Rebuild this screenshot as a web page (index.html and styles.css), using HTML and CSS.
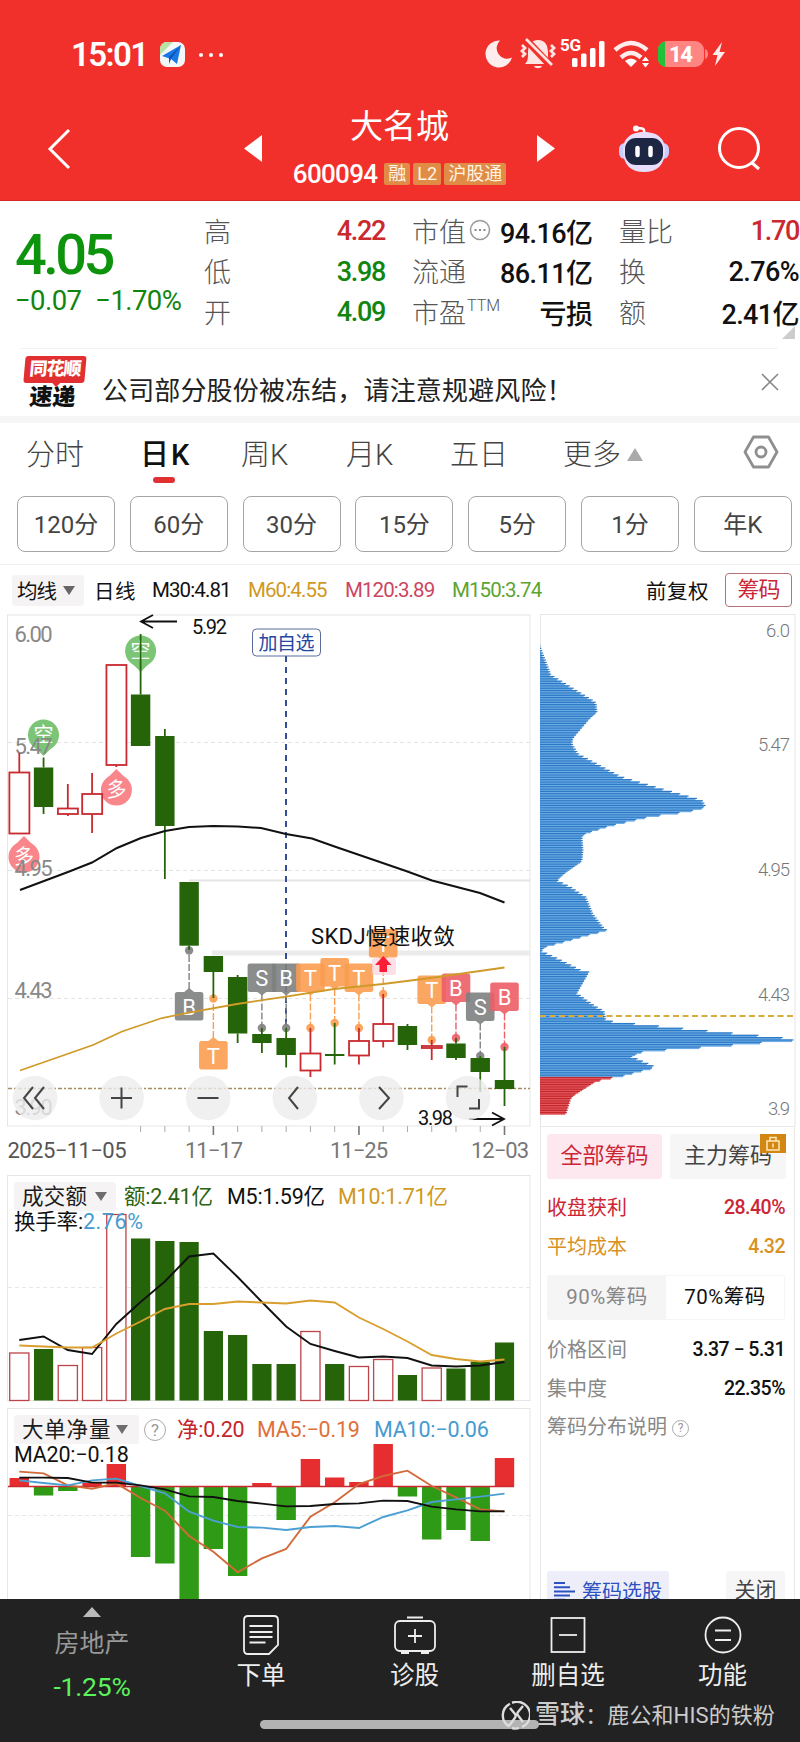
FILE: index.html
```html
<!DOCTYPE html>
<html lang="zh-CN">
<head>
  <meta charset="UTF-8">
  <meta name="viewport" content="width=device-width, initial-scale=1.0">
  <link rel="stylesheet" href="styles.css">
  <title>大名城 600094</title>
</head>
<body>
  <!-- Header -->
  <header class="header">
    <div class="status">
      <span class="clock">15:01</span>
      <svg class="app-icon" width="25" height="25" viewBox="0 0 25 25">
        <rect width="25" height="25" rx="7" fill="#f4f7f8"/>
        <path d="M0 13V7a7 7 0 0 1 7-7h6z" fill="#b6e3a4"/>
        <path d="M2 14 21 3 17 22 11 17z" fill="#1a78e6"/>
        <path d="M11 17 21 3 9 15v7z" fill="#0c54b8"/>
      </svg>
      <span class="more-dots"><i></i><i></i><i></i></span>
      <svg class="status-icons" width="244" height="42" viewBox="484 32 244 42" fill="#fff">
        <path d="M500 40.500A13.500 13.500 0 1 0 512 57.500 10.500 10.500 0 0 1 500 40.500z" fill="#ffecec"/>
        <path d="M525 64c3-3 3-6 3-11 0-8 3-13 10-13s10 5 10 13c0 5 0 8 3 11zM534 66h8c-1 3-7 3-8 0z" fill="#ffe4e4"/>
        <path d="M525 38.500 550 65" stroke="#f1302b" stroke-width="7"/>
        <path d="m526 39 26 26" stroke="#ffe4e4" stroke-width="2.600" fill="none"/>
        <path d="m522 45 3 3-3 3 3 3-3 3M551 45l3 3-3 3 3 3-3 3" stroke="#ffe4e4" stroke-width="2.800" fill="none"/>
        <text x="560" y="50.500" font-size="17" font-weight="700" textLength="21">5G</text>
        <rect x="572" y="58" width="5.500" height="9" rx="1.500"/><rect x="581" y="53.500" width="5.500" height="13.500" rx="1.500"/>
        <rect x="590" y="48" width="5.500" height="19" rx="1.500"/><rect x="599" y="41" width="5.500" height="26" rx="1.500"/>
        <g fill="none" stroke="#ffecec" stroke-width="4.500"><path d="M615 50q16-14 32 0M621 57.500q10-9 20 0"/></g>
        <path d="M625 61q6-5 12 0l-6 6z"/><path d="m642 61 3.500-4.500 3.500 4.500zM642 63l3.500 4.500 3.500-4.500z"/>
        <rect x="658" y="41" width="46" height="26" rx="9" fill="#ff8583"/>
        <path d="M665 41.500a8 8 0 0 0-7 8v9.500a8 8 0 0 0 7 8z" fill="#23c03a"/>
        <path d="M705 49q3 1 3 5t-3 5z" fill="#ff8583"/>
        <text x="669" y="62" font-size="22" font-weight="800" textLength="24">14</text>
        <path d="m722 42-9.500 13h5l-2.500 11 10-14h-5.500z" fill="#ffecec"/>
      </svg>
    </div>
    <div class="nav">
      <svg class="back" width="24" height="42" viewBox="0 0 24 42"><path d="M22 2 3 21 22 40" fill="none" stroke="#fff" stroke-width="3"/></svg>
      <svg class="prev" width="18" height="27" viewBox="0 0 18 27"><path d="M18 0v27L0 13.500z" fill="#fff"/></svg>
      <div class="stock">
        <h1>大名城</h1>
        <div class="code">600094 <span class="tag">融</span><span class="tag">L2</span><span class="tag">沪股通</span></div>
      </div>
      <svg class="next" width="18" height="27" viewBox="0 0 18 27"><path d="M0 0v27l18-13.500z" fill="#fff"/></svg>
      <svg class="robot" width="52" height="50" viewBox="0 0 52 50">
        <path d="M26 9c1-5-2-5-8-5" fill="none" stroke="#fff" stroke-width="2.500"/>
        <circle cx="18" cy="4.500" r="3" fill="#fff"/>
        <rect x="1" y="19" width="50" height="16" rx="6" fill="#c9cdfb"/>
        <path d="M26 8c16 0 21 9 21 18 0 15-8 22-21 22S5 41 5 26C5 17 10 8 26 8z" fill="#e8defb"/>
        <rect x="7" y="14" width="38" height="27" rx="11" fill="#1d2744"/>
        <path d="M19.500 24v7M32.500 24v7" stroke="#fff" stroke-width="4.500" stroke-linecap="round"/>
      </svg>
      <svg class="search" width="46" height="46" viewBox="0 0 46 46" fill="none" stroke="#fff" stroke-width="3"><circle cx="22" cy="22" r="19.500"/><path d="m34 36 8 7"/></svg>
    </div>
  </header>

  <!-- Quote -->
  <section class="quote">
    <div class="price">
      <div class="last">4.05</div>
      <div class="change"><span>−0.07</span><span>−1.70%</span></div>
    </div>
    <dl class="facts hl">
      <dt>高</dt><dd class="up">4.22</dd>
      <dt>低</dt><dd class="down">3.98</dd>
      <dt>开</dt><dd class="down">4.09</dd>
    </dl>
    <dl class="facts cap">
      <dt>市值<svg width="22" height="22" viewBox="0 0 22 22"><circle cx="11" cy="11" r="9.500" fill="none" stroke="#999" stroke-width="1.500"/><path d="M5.500 11h2m2.500 0h2m2.500 0h2" stroke="#888" stroke-width="2"/></svg></dt><dd>94.16亿</dd>
      <dt>流通</dt><dd>86.11亿</dd>
      <dt>市盈<sup>TTM</sup></dt><dd>亏损</dd>
    </dl>
    <dl class="facts vol">
      <dt>量比</dt><dd class="up tight">1.70</dd>
      <dt>换</dt><dd>2.76%</dd>
      <dt>额</dt><dd>2.41亿</dd>
    </dl>
    <i class="corner"></i>
  </section>

  <!-- Notice -->
  <section class="notice">
    <div class="notice-logo"><b>同花顺</b><em>速递</em></div>
    <p>公司部分股份被冻结，请注意规避风险！</p>
    <svg width="18" height="18" viewBox="0 0 18 18"><path d="m1 1 16 16M17 1 1 17" stroke="#888" stroke-width="1.600"/></svg>
  </section>

  <!-- Chart tabs -->
  <nav class="tabs">
    <span>分时</span><span class="active">日K</span><span>周K</span><span>月K</span><span>五日</span><span>更多<i class="tri-up"></i></span>
    <svg width="36" height="34" viewBox="0 0 36 34" fill="none" stroke="#8f8f8f" stroke-width="2.800"><path d="M10.500 2h15L34 17l-8.500 15h-15L2 17z" stroke-linejoin="round"/><circle cx="18" cy="17" r="5"/></svg>
  </nav>
  <div class="periods">
    <span>120分</span><span>60分</span><span>30分</span><span>15分</span><span>5分</span><span>1分</span><span>年K</span>
  </div>
  <div class="ma-row">
    <span class="select">均线<i class="tri-down"></i></span>
    <span class="day">日线</span><span>M30:4.81</span><span class="m60">M60:4.55</span><span class="m120">M120:3.89</span><span class="m150">M150:3.74</span>
    <span class="adjust">前复权</span><span class="chip-btn">筹码</span>
  </div>

  <main class="charts">
    <div class="left">
      <svg id="kline" width="540" height="560" viewBox="0 612 540 560"></svg>
      <div class="panel">
        <svg id="volume" width="540" height="236" viewBox="0 1172 540 236"></svg>
        <div class="legend">
          <span class="select">成交额<i class="tri-down"></i></span>
          <span class="c-green">额:2.41亿</span><span class="m5">M5:1.59亿</span><span class="m60 m10">M10:1.71亿</span>
          <div class="second">换手率:<span class="c-blue rate">2.76%</span></div>
        </div>
      </div>
      <div class="panel">
        <svg id="netflow" width="540" height="191" viewBox="0 1408 540 191"></svg>
        <div class="legend net">
          <span class="select">大单净量<i class="tri-down"></i></span><span class="help">?</span>
          <span class="c-red">净:0.20</span><span class="c-orange">MA5:−0.19</span><span class="c-blue">MA10:−0.06</span>
          <div class="second">MA20:−0.18</div>
        </div>
      </div>
    </div>

    <aside class="right">
      <svg id="chips" width="260" height="514" viewBox="540 612 260 514"></svg>
      <div class="chip-info">
        <div class="chip-tabs">
          <span class="on">全部筹码</span>
          <span>主力筹码<i class="lock"><svg width="16" height="15" viewBox="0 0 16 15" fill="none" stroke="#ffe7b8" stroke-width="1.500"><rect x="2" y="5" width="12" height="9"/><path d="M5 5V1.500h6V5M8 7.500v4"/></svg></i></span>
        </div>
        <div class="row profit"><span>收盘获利</span><b>28.40%</b></div>
        <div class="row cost"><span>平均成本</span><b>4.32</b></div>
        <div class="segment"><span>90%筹码</span><span class="on">70%筹码</span></div>
        <div class="row"><span>价格区间</span><b>3.37 − 5.31</b></div>
        <div class="row"><span>集中度</span><b>22.35%</b></div>
        <div class="row"><span>筹码分布说明 <i class="help small">?</i></span></div>
        <div class="chip-actions">
          <span class="pick"><svg width="21" height="21" viewBox="0 0 21 21" stroke="#2b52c0" stroke-width="2"><path d="M0 2h11M0 6.200h16M0 10.400h21M0 14.600h16M0 18.800h11"/></svg>筹码选股</span>
          <span class="close">关闭</span>
        </div>
      </div>
    </aside>
  </main>

  <!-- Bottom bar -->
  <footer class="footer">
    <div class="sector"><i class="tri-up"></i><span>房地产</span><b>-1.25%</b></div>
    <div class="item">
      <svg width="36" height="40" viewBox="0 0 36 40"><path d="M5 1h26q4 0 4 4v25l-9 9H5q-4 0-4-4V5q0-4 4-4zM6.500 11h23M6.500 17h23M6.500 22h23M6.500 27.500h16"/></svg>
      <span>下单</span>
    </div>
    <div class="item">
      <svg width="42" height="40" viewBox="0 0 42 40"><rect x="1" y="6" width="40" height="30" rx="5"/><path d="M13 2.500h16M7 38h8M27 38h8M21 14v14M14 21h14"/></svg>
      <span>诊股</span>
    </div>
    <div class="item">
      <svg width="36" height="40" viewBox="0 0 36 40"><rect x="1.500" y="3" width="33" height="34"/><path d="M9 20h18"/></svg>
      <span>删自选</span>
    </div>
    <div class="item">
      <svg width="38" height="40" viewBox="0 0 38 40"><circle cx="19" cy="20" r="17.500"/><path d="M11 15.500h16M11 25h16"/></svg>
      <span>功能</span>
    </div>
    <div class="home-bar"></div>
    <div class="watermark">
      <svg width="29" height="29" viewBox="0 0 29 29" fill="none" stroke="#ddd" stroke-width="2.400"><path d="M8 25.500A13 13 0 0 1 9 2.800M11 1.800A13 13 0 0 1 21 26M18 27.200A13 13 0 0 1 11 27M9 7l5 6q1.500 2-.5 4.500L8 25M22 5l-5 6q-1.500 2 .5 4L22 21"/></svg>
      <span><b>雪球</b>：鹿公和HIS的铁粉</span>
    </div>
  </footer>

  <script src="script.js"></script>
</body>
</html>
```
FILE: styles.css
```css
/* General Styles */
* {
  box-sizing: border-box;
}

body {
  margin: 0;
  width: 800px;
  height: 1742px;
  overflow: hidden;
  background: #fff;
  color: #111;
  font-family: Roboto, "Noto Sans CJK SC", sans-serif;
  display: flex;
  flex-direction: column;
}

body > * {
  flex: none;
}

svg {
  display: block;
  flex: none;
}

svg text {
  font-family: Roboto, "Noto Sans CJK SC", sans-serif;
}

h1, p, dl, dt, dd {
  margin: 0;
  font-weight: 400;
}

i, em {
  font-style: normal;
}

.up { color: #c9292f; }
.down { color: #12850f; }

.tri-up, .tri-down {
  display: inline-block;
  border: 8px solid transparent;
}

.tri-up {
  border-top: 0;
  border-bottom: 13px solid #aaa;
}

.tri-down {
  border-width: 9px 6.5px 0;
  border-top-color: #666;
}

/* Header */
.header {
  height: 201px;
  background: #f1302b;
  border-bottom: 1px solid #d5282b;
  color: #fff;
}

.status {
  display: flex;
  align-items: center;
  height: 95px;
  padding: 14px 0 0 71px;
}

.clock {
  width: 89px;
  font-size: 33px;
  font-weight: 600;
  letter-spacing: -1.6px;
}

.more-dots {
  display: flex;
  gap: 6px;
  margin-left: 14px;
}

.more-dots i {
  width: 4px;
  height: 4px;
  border-radius: 50%;
  background: #fff;
}

.status-icons {
  margin-left: 261px;
  margin-top: -3px;
}

.nav {
  display: flex;
  height: 104px;
  align-items: center;
  padding: 3px 0 0 47px;
}

.prev { margin-left: 173px; }

.stock {
  width: 275px;
  text-align: center;
}

.stock h1 {
  height: 50px;
  font-size: 33px;
  line-height: 44px;
}

.code {
  display: flex;
  justify-content: center;
  align-items: center;
  gap: 3px;
  height: 38px;
  font-size: 26px;
  font-weight: 500;
  letter-spacing: -0.7px;
}

.tag {
  height: 22px;
  padding: 0 4px;
  border-radius: 2px;
  background: #e08c46;
  color: #fff4e4;
  font-size: 18px;
  font-weight: 400;
  line-height: 21px;
  letter-spacing: 0;
}

.tag:first-child {
  margin-left: 4px;
}

.robot {
  margin-left: 63px;
}

.search {
  margin-left: 47px;
}

/* Quote */
.quote {
  position: relative;
  display: flex;
  height: 147px;
  padding-top: 10px;
}

.price {
  width: 204px;
  padding: 1px 0 0 15px;
}

.last {
  padding-top: 13px;
  height: 67px;
  color: #0e930c;
  font-size: 56px;
  font-weight: 500;
  line-height: 60px;
  letter-spacing: -3.6px;
}

.change {
  display: flex;
  gap: 14px;
  padding-top: 5px;
  color: #12850f;
  font-size: 27.5px;
  line-height: 34px;
  letter-spacing: -0.6px;
}

.facts {
  display: grid;
  grid-template-columns: auto auto;
  grid-template-rows: repeat(3, 40.5px);
  align-items: center;
  justify-content: space-between;
  align-content: start;
  font-size: 27px;
  white-space: nowrap;
}

.facts dt {
  display: flex;
  align-items: center;
  gap: 3px;
  margin-top: -2px;
  color: #555;
  font-weight: 300;
}

.facts dd {
  font-weight: 500;
  letter-spacing: -0.6px;
  text-align: right;
}

.facts sup {
  font-size: 16px;
  line-height: 16px;
  margin-top: -10px;
  margin-left: -2px;
}

.hl { width: 181px; }
.hl dd, .facts .tight { letter-spacing: -1.3px; }
.cap { width: 180px; margin-left: 27px; }
.vol { width: 180px; margin-left: 27px; }

.corner {
  position: absolute;
  right: 5px;
  bottom: 9px;
  border-left: 13px solid transparent;
  border-bottom: 13px solid #ccc;
}

/* Notice */
.notice {
  display: flex;
  height: 75px;
  border-bottom: 7px solid #f6f6f6;
  padding: 8px 21px 0 23px;
  background: linear-gradient(#eef3f3, #eef3f3) 20px 0 / 758px 1px no-repeat;
}

.notice-logo {
  width: 61px;
  text-align: center;
  transform: skewX(-5deg);
}

.notice-logo b {
  position: relative;
  display: block;
  height: 27px;
  border-radius: 3px;
  background: #e23032;
  color: #fff;
  font-size: 18px;
  line-height: 26px;
  letter-spacing: -1px;
  font-weight: 900;
}

.notice-logo b::after {
  content: "";
  position: absolute;
  left: 28px;
  top: 26px;
  border: 5px solid transparent;
  border-width: 5px 5px 0;
  border-top-color: #e23032;
}

.notice-logo em {
  display: block;
  font-size: 23px;
  line-height: 29px;
  font-weight: 900;
}

.notice p {
  flex: 1;
  padding: 17px 0 0 18px;
  font-size: 26px;
  letter-spacing: 0.15px;
  line-height: 36px;
  color: #222;
}

.notice > svg {
  margin-top: 17px;
}

/* Tabs */
.tabs {
  position: relative;
  display: grid;
  grid-template-columns: 114px 101px 105px 104px 113px 180px auto;
  height: 73px;
  padding: 0 0 15px 26px;
  align-items: center;
  color: #444;
  font-size: 29px;
  font-weight: 300;
}

.tabs .active {
  color: #111;
  font-weight: 500;
  letter-spacing: 2px;
}

.tabs .active::after {
  content: "";
  position: absolute;
  left: 153px;
  top: 54px;
  width: 22px;
  height: 6px;
  border-radius: 3px;
  background: #e03032;
}

.tabs .tri-up {
  margin-left: 6px;
  vertical-align: 4px;
}

.periods {
  display: grid;
  grid-template-columns: repeat(7, 98px);
  gap: 14.8px;
  height: 69px;
  padding-left: 17px;
  border-bottom: 1px solid #f0f0f0;
}

.periods span {
  height: 56px;
  border: 1px solid #a5a5a5;
  border-radius: 8px;
  text-align: center;
  font-size: 24px;
  line-height: 56px;
  color: #444;
}

.ma-row {
  display: grid;
  grid-template-columns: 83px 57px 96px 97px 107px 194px 79px 67px;
  height: 47px;
  padding: 3px 0 0 12px;
  align-items: center;
  font-size: 20.500px;
  letter-spacing: -0.9px;
}

.select {
  display: flex;
  align-items: center;
  background: #f6f3f4;
  border-radius: 3px;
}

.ma-row .select {
  width: 72px;
  height: 31px;
  padding-left: 5px;
  gap: 7px;
}

.m60 { color: #cf981f; }
.m120 { color: #cc4560; }
.m150 { color: #5ca42f; }

.ma-row .day, .adjust {
  letter-spacing: 0.5px;
}

.ma-row .day {
  margin-left: -1px;
}

.chip-btn {
  height: 34px;
  border: 1.5px solid #b97078;
  border-radius: 4px;
  color: #cc2536;
  font-size: 22px;
  line-height: 31px;
  text-align: center;
}

/* Charts */
.charts {
  display: flex;
  height: 987px;
  overflow: hidden;
}

.left {
  width: 540px;
}

.panel {
  position: relative;
}

.legend {
  position: absolute;
  left: 14px;
  top: 10px;
  width: 520px;
  display: grid;
  grid-template-columns: 110px 103px 111px auto;
  font-size: 21.500px;
  line-height: 29px;
  letter-spacing: -0.2px;
  white-space: nowrap;
}

.legend .select {
  width: 102px;
  height: 29px;
  padding-left: 8px;
  gap: 8px;
  letter-spacing: 0.3px;
  opacity: 0.95;
}

.second {
  grid-column: 1 / -1;
  line-height: 22px;
}

.rate {
  letter-spacing: 0.6px;
}

.net {
  top: 7px;
  grid-template-columns: 130px 33px 80px 117px auto;
}

.net .select {
  width: 125px;
  gap: 5px;
  letter-spacing: 0.8px;
}

.help {
  width: 22px;
  height: 22px;
  margin-top: 4px;
  border: 1.5px solid #aaa;
  border-radius: 50%;
  color: #999;
  font-size: 17px;
  line-height: 20px;
  text-align: center;
}

.help.small {
  display: inline-block;
  width: 17px;
  height: 17px;
  margin: 0;
  font-size: 12px;
  line-height: 14px;
  vertical-align: 2px;
}

.c-green { color: #2c6410; }
.c-blue { color: #459bd0; }
.c-red { color: #c5242c; }
.c-orange { color: #df7039; }

/* Chip distribution */
.right {
  width: 260px;
}

.chip-info {
  width: 255px;
  height: 473px;
  padding: 7px 9px 0 6px;
  border: 1px solid #e8e8e8;
  border-bottom: 0;
}

.chip-tabs {
  display: grid;
  grid-template-columns: 115px 116px;
  gap: 8px;
  height: 55px;
}

.chip-tabs span {
  position: relative;
  height: 45px;
  border-radius: 3px;
  background: #f6f6f6;
  color: #444;
  font-size: 22px;
  line-height: 43px;
  text-align: center;
}

.chip-tabs .on {
  background: #fee8ef;
  color: #cc2536;
}

.lock {
  position: absolute;
  right: 0;
  top: 0;
  width: 26px;
  height: 19px;
  padding: 2px 5px;
  background: #d28713;
}

.row {
  display: flex;
  justify-content: space-between;
  height: 38.500px;
  color: #888;
  font-size: 20px;
  line-height: 38px;
}

.row b {
  color: #111;
  font-size: 19.500px;
  font-weight: 500;
  letter-spacing: -0.5px;
}

.profit, .profit b { color: #cc2536; }
.cost, .cost b { color: #d9911f; }

.segment {
  display: grid;
  grid-template-columns: 1fr 1fr;
  height: 45px;
  margin: 9px 0 11px;
  border-radius: 3px;
  background: #f5f5f5;
  padding: 1px;
  font-size: 20.500px;
  line-height: 43px;
  letter-spacing: 0.5px;
  text-align: center;
  color: #888;
}

.segment .on {
  background: #fff;
  color: #111;
}

.chip-actions {
  display: flex;
  justify-content: space-between;
  margin-top: 124px;
  line-height: 38px;
}

.chip-actions span {
  height: 44px;
  border-radius: 3px;
  background: #f6f6f6;
  font-size: 20px;
  color: #444;
}

.chip-actions .close {
  width: 59px;
  font-size: 21px;
  text-align: center;
}

.chip-actions .pick {
  display: flex;
  gap: 7px;
  align-items: center;
  width: 122px;
  height: 42px;
  padding-left: 7px;
  background: #eeeefb;
  color: #2b52c0;
}

/* Bottom bar */
.footer {
  position: relative;
  display: grid;
  grid-template-columns: 184px 154px 153px 154px 155px;
  height: 143px;
  background: #222;
  color: #eee;
  font-size: 24.500px;
}

.sector, .item {
  display: flex;
  flex-direction: column;
  align-items: center;
}

.sector {
  padding-top: 8px;
  color: #999;
}

.sector .tri-up {
  border-width: 0 9px 10px;
  border-bottom-color: #bbb;
}

.sector span {
  line-height: 36px;
  margin-top: 9px;
  font-size: 25px;
}

.sector b {
  margin-top: 8px;
  color: #5cf25c;
  font-size: 26.500px;
  font-weight: 400;
  line-height: 34px;
  letter-spacing: -0.2px;
}

.item {
  padding-top: 16px;
  gap: 4px;
}

.item svg {
  fill: none;
  stroke: #eee;
  stroke-width: 1.8;
}

.item span {
  line-height: 34px;
}

.home-bar {
  position: absolute;
  left: 260px;
  top: 121px;
  width: 279px;
  height: 9px;
  border-radius: 5px;
  background: #b3b3b3;
}

.watermark {
  position: absolute;
  left: 501px;
  top: 100px;
  display: flex;
  align-items: center;
  gap: 5px;
  color: #ccc;
  font-size: 22px;
  line-height: 32px;
  letter-spacing: 0.1px;
  white-space: nowrap;
}

.watermark b {
  font-size: 25px;
  font-weight: 500;
}
```
FILE: script.js
```js
const NS = 'http://www.w3.org/2000/svg';
const GREEN = '#256409';
const RED = '#c9292f';

const kline = document.getElementById('kline');
const volume = document.getElementById('volume');
const netflow = document.getElementById('netflow');
const chips = document.getElementById('chips');

function add(parent, name, attrs, text) {
  const el = document.createElementNS(NS, name);
  for (const key in attrs) el.setAttribute(key, attrs[key]);
  if (text) el.textContent = text;
  parent.appendChild(el);
  return el;
}

function line(parent, x1, y1, x2, y2, stroke, width, dash) {
  return add(parent, 'line', { x1, y1, x2, y2, stroke, 'stroke-width': width || 1, 'stroke-dasharray': dash || 'none' });
}

function label(parent, x, y, text, length, fill, size, extra) {
  return add(parent, 'text', Object.assign({ x, y, fill, 'font-size': size, textLength: length }, extra), text);
}

// Horizontal centre of day i
function cx(i) {
  return 19.3 + 24.26 * i;
}

function curve(parent, values, stroke) {
  const points = values.map((y, i) => cx(i) + ',' + y).join(' ');
  add(parent, 'polyline', { points, fill: 'none', stroke, 'stroke-width': 1.9 });
}

function frame(parent, y, height) {
  add(parent, 'rect', { x: 7.5, y, width: 522.5, height, fill: 'none', stroke: '#e6e6e6' });
}

/* K line */
frame(kline, 615, 511);
[742.5, 870.5, 998.5].forEach(y => line(kline, 8, y, 530, y, '#e4e4e4', 1, '4 3'));
line(kline, 189, 880.5, 530, 880.5, '#e6e6e6', 2);
line(kline, 212, 953, 530, 953, '#ebebeb', 5);
line(kline, 8, 1088.5, 530, 1088.5, '#a98a5e', 1.4, '4 2 2 2');

function pin(x, y, text, up) {
  const s = up ? -1 : 1;
  const color = up ? '#f8868b' : '#7cc577';
  add(kline, 'path', {
    d: `M${x - 8} ${y + 13 * s}L${x} ${y + 21 * s}L${x + 8} ${y + 13 * s}z`, fill: color
  });
  add(kline, 'circle', { cx: x, cy: y, r: 15.5, fill: color });
  label(kline, x - 10, y + 7, text, 20, '#fff', 20);
}

pin(140.6, 651, '空');
pin(43.5, 735, '空');
pin(116.4, 790, '多', true);
pin(24, 857, '多', true);

[['6.00', 641.5], ['5.47', 754], ['4.95', 875.5], ['4.43', 998], ['3.90', 1115]].forEach(p => {
  label(kline, 14.5, p[1], p[0], 38, '#888', 22);
});

line(kline, 286, 656, 286, 1028, '#1e3a8a', 1.8, '6 5');
add(kline, 'rect', { x: 252.5, y: 629, width: 68, height: 27, rx: 4, fill: '#fff', stroke: '#5b6c9c' });
label(kline, 258.5, 649.5, '加自选', 56, '#2448a0', 19);

// [top of wick, top of body, bottom of body, bottom of wick, rising]
const candles = [
  [753, 772.5, 833.5, 833.5, 1], [757.5, 767.5, 807, 814, 0], [784, 808.5, 814, 816, 1],
  [773, 794, 814, 833, 1], [664.5, 665, 765, 767, 1], [634, 694.5, 746, 746, 0],
  [729, 736, 826, 879, 0], [882, 882, 945.7, 950, 0], [956, 956, 972, 998, 0],
  [975, 977, 1033.5, 1043, 0], [1028, 1034, 1043, 1053, 0], [1028, 1038, 1055, 1067.5, 0],
  [1028, 1053.5, 1070.5, 1077, 1], [1023, 1054, 1056, 1064.5, 0], [1028, 1041, 1055.5, 1064.5, 1],
  [994, 1024, 1041, 1047.5, 1], [1024, 1026, 1045, 1050, 0], [1040, 1046, 1048, 1060, 1],
  [1038, 1043.5, 1058, 1060, 0], [1056, 1058, 1072, 1092, 0], [1047, 1080, 1089, 1106, 0]
];

// [day, tag top, letter, colour, dot y, pointer up]
const GREY = '#7f8080';
const ORANGE = '#fb9d50';
const PINK = '#ee5f68';
const tags = [
  [7, 992, 'B', GREY, 950.5, 1], [8, 1041, 'T', ORANGE, 998.5, 1], [10, 963.5, 'S', GREY, 1028],
  [11, 963.5, 'B', GREY, 1028], [12, 963.5, 'T', ORANGE, 1028], [13, 958, 'T', ORANGE, 1023],
  [14, 963.5, 'T', ORANGE, 1028], [15, 929, 'T', ORANGE, 994], [17, 975.5, 'T', ORANGE, 1040],
  [18, 973.5, 'B', PINK, 1038], [19, 992.5, 'S', GREY, 1056], [20, 982.5, 'B', PINK, 1047]
];

tags.forEach(([i, y, letter, color, dot, up]) => {
  const x = cx(i);
  line(kline, x, up ? y - 3 : y + 31, x, dot, color, 1.4, '7 2');
  add(kline, 'circle', { cx: x, cy: dot, r: 4.2, fill: color, opacity: 0.9 });
});

candles.forEach(([high, top, bottom, low, rising], i) => {
  const x = cx(i);
  const color = rising ? RED : GREEN;
  line(kline, x, high, x, top, color, 1.8);
  line(kline, x, bottom, x, low, color, 1.8);
  add(kline, 'rect', {
    x: x - (rising ? 9.9 : 9.7), y: top, width: rising ? 20 : 19.4, height: bottom - top,
    fill: rising ? '#fff' : GREEN, stroke: rising ? RED : 'none', 'stroke-width': 1.8
  });
});

tags.forEach(([i, y, letter, color, dot, up]) => {
  const x = cx(i);
  const tip = up ? `M${x - 5} ${y}l5 -4 5 4z` : `M${x - 5} ${y + 28}l5 4 5 -4z`;
  const g = add(kline, 'g', { opacity: 0.9 });
  add(g, 'path', { d: tip, fill: color });
  add(g, 'rect', { x: x - 14.3, y, width: 28.6, height: 28.5, rx: 2.5, fill: color });
  label(g, x, y + 22.5, letter, 13, '#fff', 22, { 'text-anchor': 'middle' });
});

// Buy arrow
add(kline, 'rect', { x: 372, y: 958, width: 24, height: 17, rx: 3, fill: '#fbd3dc', opacity: 0.7 });
add(kline, 'path', { d: 'M383.300 956 391.500 965H387v7h-7.500v-7H375z', fill: '#fb1c35' });

add(kline, 'polyline', {
  points: '20,890 44,881 68,872 92,862.5 117,848 141,838 165,831 189,827 213,826 238,826.5 261,828 286,834 312,838.5 336,847 374,860 406,871 432,880.5 480,893 504.500,902.5',
  fill: 'none', stroke: '#111', 'stroke-width': 2
});
add(kline, 'polyline', {
  points: '20,1070.5 93,1045 122,1031.5 162,1018 189,1012.6 237,1004 286,996.6 334,989 383,984 430.500,978 504.500,967.5',
  fill: 'none', stroke: '#d09a28', 'stroke-width': 1.8
});
label(kline, 311, 944, 'SKDJ慢速收敛', 144, '#111', 22);
label(kline, 192, 634, '5.92', 35, '#111', 20);
label(kline, 418, 1125, '3.98', 35, '#111', 20);
add(kline, 'path', {
  d: 'M177 621.500H141M153 615 141 621.500 153 628M469 1119H504M492 1112.500 504 1119 492 1125.500',
  fill: 'none', stroke: '#111', 'stroke-width': 1.8
});

// Round controls
const icons = [
  'M33 1087 24 1098l9 11M44 1087l-9 11 9 11', 'M111 1098h21M121.500 1087.500v21', 'M197.500 1098h21',
  'M298 1087l-9 11 9 11', 'M379 1087l10 11-10 11', 'M457.500 1097v-10.500h10M479 1099v9.500h-10'
];
icons.forEach((d, i) => {
  add(kline, 'circle', { cx: 35 + 86.6 * i, cy: 1098, r: 22.3, fill: '#ececec', opacity: 0.8 });
  add(kline, 'path', { d, fill: 'none', stroke: '#444', 'stroke-width': 2 });
});

for (let i = 5; i <= 20; i++) {
  const big = i === 8 || i === 14 || i === 20;
  line(kline, cx(i), 1126, cx(i), big ? 1135 : 1132, big ? '#777' : '#aaa', big ? 1.6 : 1);
}
label(kline, 7.5, 1158, '2025−11−05', 119, '#555', 22);
label(kline, 185, 1158, '11−17', 58, '#777', 22);
label(kline, 330, 1158, '11−25', 58, '#777', 22);
label(kline, 471, 1158, '12−03', 58, '#777', 22);

/* Turnover */
frame(volume, 1175.5, 225);
line(volume, 8, 1287.5, 530, 1287.5, '#e8e8e8', 1, '4 3');
const tops = [1353, 1349, 1365.5, 1347.5, 1214.5, 1238.5, 1241, 1242, 1331, 1335, 1364, 1364, 1331.5, 1364, 1366.5, 1359.5, 1375, 1368, 1368.5, 1361.5, 1342.5];
tops.forEach((y, i) => {
  const hollow = [0, 2, 3, 4, 12, 14, 15, 17].includes(i);
  add(volume, 'rect', {
    x: cx(i) - 9.6, y, width: 19.2, height: 1400.5 - y,
    fill: hollow ? '#fff' : GREEN, stroke: hollow ? '#bd4449' : 'none', 'stroke-width': 1.3
  });
});
curve(volume, [1340, 1336.5, 1350, 1354, 1324, 1302, 1281.5, 1256.5, 1253.5, 1277, 1302, 1326.5, 1344, 1351, 1357.5, 1356.5, 1358, 1365.5, 1366.5, 1365.5, 1362], '#111');
curve(volume, [1345.5, 1346.5, 1347.5, 1347.5, 1333.5, 1321.5, 1309, 1304, 1304, 1301.5, 1302.5, 1303.5, 1300.5, 1302.5, 1317.5, 1329, 1341.5, 1355, 1359, 1361.5, 1359.5], '#d99f2e');

/* Net flow */
frame(netflow, 1408.5, 200);
line(netflow, 8, 1515.5, 530, 1515.5, '#e8e8e8', 1, '4 3');
const ends = [1478, 1495.5, 1491, 1483, 1464, 1557, 1563.5, 1600, 1549, 1576, 1483, 1520, 1459, 1477.5, 1482, 1444, 1496.5, 1539.5, 1530, 1541, 1458];
ends.forEach((y, i) => {
  add(netflow, 'rect', {
    x: cx(i) - 9.7, y: Math.min(y, 1486.5), width: 19.4, height: Math.abs(y - 1486.5),
    fill: y < 1486.5 ? '#e62d2f' : '#2f9a16'
  });
});
line(netflow, 8, 1486.5, 514, 1486.5, '#c9292f', 1.6);
const offset = v => 1400 + v / 3;
curve(netflow, [215, 220, 256, 266, 250, 294, 332, 408, 455, 517, 475, 447, 350, 307, 252, 228, 212, 258, 292, 328, 334].map(offset), '#d2693a');
curve(netflow, [241, 249, 256, 241, 236, 258, 280, 335, 362, 381, 383, 390, 381, 378, 384, 351, 331, 306, 298, 290, 281].map(offset), '#4b9fd3');
curve(netflow, [233, 233, 234, 248, 248, 256, 268, 289, 291, 303, 311, 319, 318, 312, 310, 302, 303, 320, 328, 334, 334].map(offset), '#111');

/* Chip distribution: [y, bar length] */
const profile = [
  [646, 1], [675, 12], [677, 16], [701, 55], [703, 57], [712, 58], [718, 51], [738, 34], [743.5, 33],
  [753.5, 39], [776.5, 82], [789, 124], [800, 163], [807, 167], [811.5, 148], [816, 112], [825.5, 71],
  [833, 47], [836.5, 43], [850, 44], [861, 43], [872, 27], [880, 18], [887, 32], [897, 47], [914, 54],
  [928, 65], [930, 68], [934.5, 50], [942, 23], [945, 12], [947, 5], [951, 3], [958, 18], [970, 42],
  [972, 50], [993, 38], [1005.5, 55.5], [1011, 65], [1020.5, 67], [1023, 90], [1027.5, 136],
  [1032, 183], [1037, 238], [1039, 255], [1041.5, 232], [1046, 177], [1048.5, 138], [1051, 105],
  [1056, 92], [1067, 117], [1071.5, 99], [1076.5, 80], [1078, 69], [1081, 57], [1095, 35], [1098, 32], [1114, 27]
];
add(chips, 'rect', { x: 540.5, y: 614.5, width: 254.5, height: 520, fill: 'none', stroke: '#e6e6e6' });
for (let y = 646; y <= 1113.5; y += 2.345) {
  const k = profile.findIndex(p => p[0] > y);
  const [y0, w0] = profile[k - 1];
  const [y1, w1] = profile[k];
  const peak = Math.abs(y - 1039) < 1.2;
  const width = peak ? 254 : w0 + (w1 - w0) * (y - y0) / (y1 - y0);
  const red = y > 1077;
  add(chips, 'rect', { x: 540, y: y - 0.3, width: Math.max(width - 2, 0), height: 2.4, fill: red ? '#e4575b' : '#6cace6' });
  add(chips, 'rect', { x: 540, y: y - 0.6, width: width - 0.5, height: 1.2, fill: red ? '#c3262d' : '#2b78c4' });
}
line(chips, 540, 1016, 795, 1016, '#d9ab3a', 1.8, '6 3.5');
[['6.0', 636.5, 24], ['5.47', 751, 32], ['4.95', 876, 32], ['4.43', 1001, 32], ['3.9', 1115, 22]].forEach(p => {
  label(chips, 790 - p[2], p[1], p[0], p[2], '#777', 18.5, { 'font-weight': 300 });
});
```
